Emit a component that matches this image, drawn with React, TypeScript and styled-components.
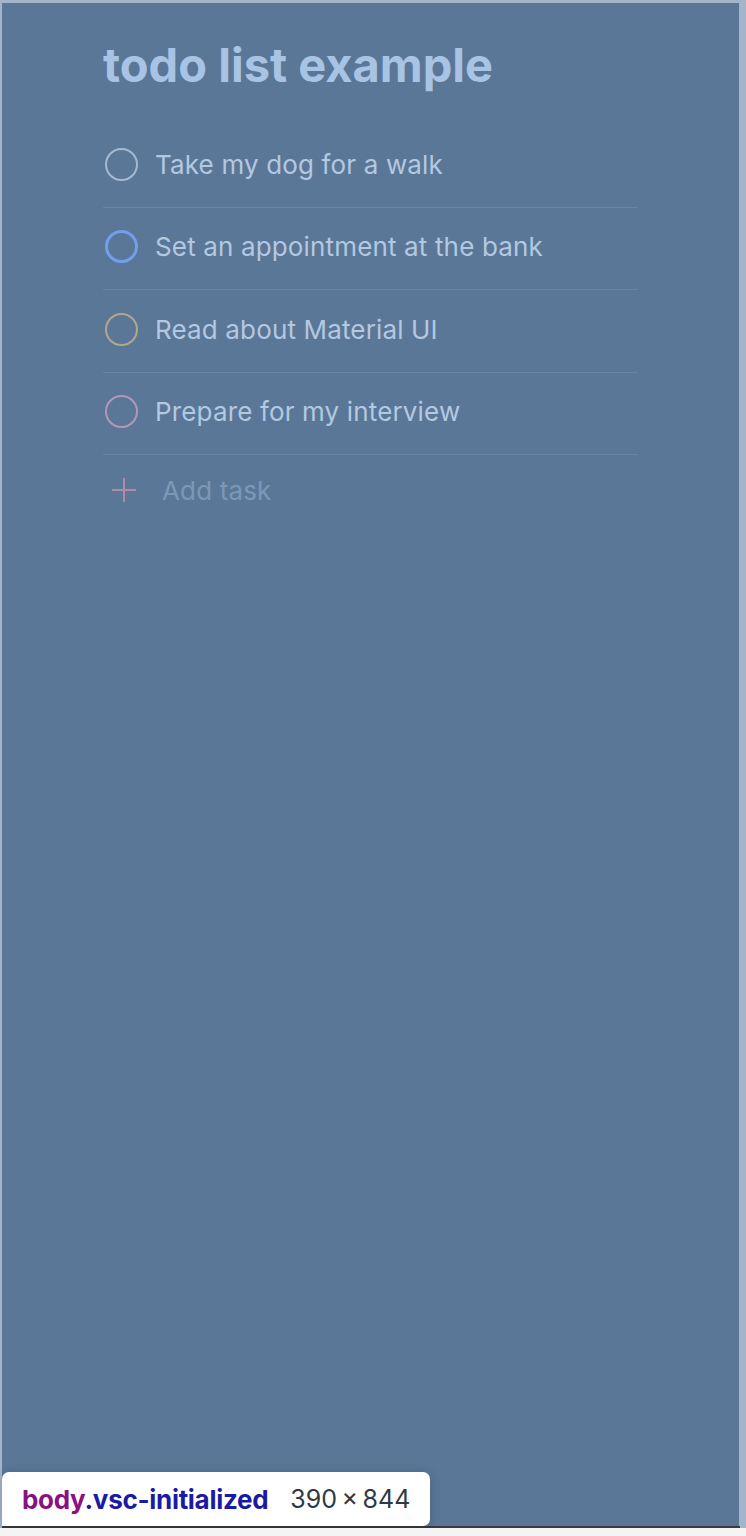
import React from 'react';
import styled, { createGlobalStyle } from 'styled-components';

const GlobalStyle = createGlobalStyle`
  html, body {
    margin: 0;
    padding: 0;
    background: #f4f4f5;
  }
  body {
    font-family: Inter, "Noto Sans", sans-serif;
  }
`;

type Task = { label: string; ring: string; thick?: boolean };

const tasks: Task[] = [
  { label: 'Take my dog for a walk', ring: '#a6b9cf' },
  { label: 'Set an appointment at the bank', ring: '#72a0e8', thick: true },
  { label: 'Read about Material UI', ring: '#b1a88c' },
  { label: 'Prepare for my interview', ring: '#b497b8' },
];

const App = () => {
  return (
    <>
      <GlobalStyle />
      <Shell>
        <Screen>
          <Content>
            <Title>todo list example</Title>
            <List>
              {tasks.map((t) => (
                <Row key={t.label}>
                  <Ring $color={t.ring} $thick={t.thick} />
                  <Label>{t.label}</Label>
                </Row>
              ))}
            </List>
            <AddRow>
              <PlusIcon viewBox="0 0 26 26">
                <path d="M13 1v24M1 13h24" stroke="#b08aab" strokeWidth="2" fill="none" />
              </PlusIcon>
              <AddLabel>Add task</AddLabel>
            </AddRow>
          </Content>
          <Inspector>
            <Selector>
              <Tag>body</Tag>
              <Klass>.vsc-initialized</Klass>
            </Selector>
            <Size>390{'\u2009'}×{'\u2009'}844</Size>
          </Inspector>
        </Screen>
        <BottomEdge />
      </Shell>
    </>
  );
};

export default App;

const Shell = styled.div`
  background: #a4b4c9;
  padding: 3px 7px 0 2px;
  width: 746px;
  box-sizing: border-box;
`;

const Screen = styled.div`
  position: relative;
  height: 1523px;
  background: #5b7797;
`;

const BottomEdge = styled.div`
  height: 2px;
  margin-right: -1px;
  background: #3b3b3d;
`;

const Content = styled.div`
  display: flex;
  flex-direction: column;
  padding: 32px 0 0 101px;
  width: 535px;
`;

const Title = styled.h1`
  margin: 0 0 30px;
  font-size: 47px;
  line-height: 60px;
  font-weight: 700;
  color: #a8c3e3;
`;

const List = styled.div`
  display: flex;
  flex-direction: column;
`;

const Row = styled.div`
  display: flex;
  align-items: center;
  gap: 17px;
  height: 82.5px;
  padding-bottom: 3px;
  border-bottom: 1px solid #6a84a2;
  box-sizing: border-box;
`;

const Ring = styled.span<{ $color: string; $thick?: boolean }>`
  width: 33px;
  height: 33px;
  box-sizing: border-box;
  border-radius: 50%;
  border: ${(p) => (p.$thick ? 3 : 2)}px solid ${(p) => p.$color};
  flex-shrink: 0;
  margin-left: 2px;
`;

const Label = styled.span`
  font-size: 26px;
  letter-spacing: 0.15px;
  color: #b3c8e1;
`;

const AddRow = styled.div`
  display: flex;
  align-items: center;
  gap: 25px;
  height: 70px;
  padding-left: 8px;
`;

const PlusIcon = styled.svg`
  width: 26px;
  height: 26px;
`;

const AddLabel = styled.span`
  font-size: 26px;
  letter-spacing: 0.15px;
  color: #7d97b7;
`;

const Inspector = styled.div`
  position: absolute;
  left: 0;
  bottom: 0;
  display: flex;
  align-items: center;
  gap: 22px;
  height: 54px;
  padding: 0 20px 0 20px;
  background: #ffffff;
  border-radius: 7px 7px 7px 0;
  box-shadow: 0 2px 12px rgba(0, 0, 0, 0.18);
`;

const Selector = styled.span`
  font-size: 26px;
  font-weight: 700;
  letter-spacing: -0.3px;
`;

const Tag = styled.span`
  color: #881280;
`;

const Klass = styled.span`
  color: #1a1aa6;
`;

const Size = styled.span`
  font-size: 25px;
  color: #303942;
`;
